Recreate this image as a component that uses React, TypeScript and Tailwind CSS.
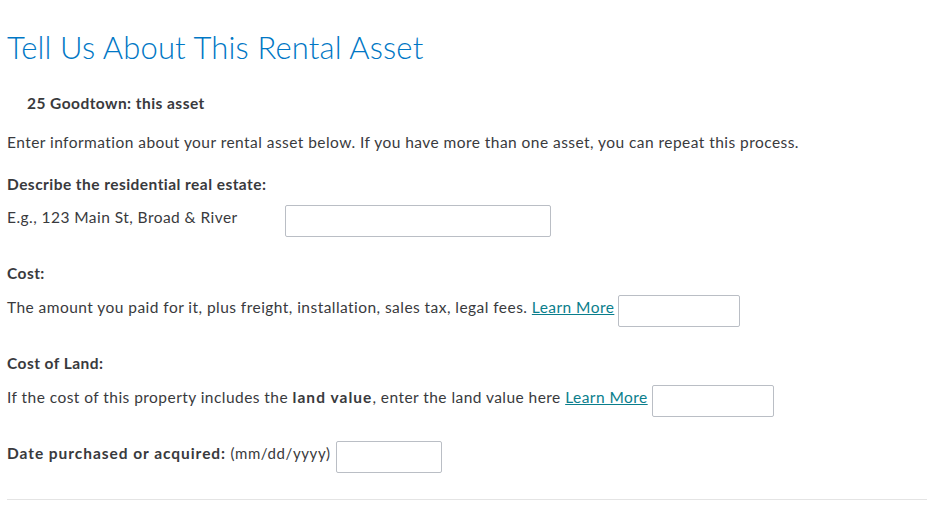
export default function App() {
  return (
    <div className="bg-white w-[942px] h-[517px] overflow-hidden px-[7px] text-[#393a3d] font-['Lato',sans-serif] text-[15.5px] leading-[20px] tracking-[0.45px]">
      <h1 className="pt-[28px] text-[31px] leading-[38px] font-light tracking-[0.15px] text-[#0077c5]">
        Tell Us About This Rental Asset
      </h1>
      <div className="mt-[27px] pl-[20px] font-bold">25 Goodtown: this asset</div>
      <p className="mt-[19px]">
        Enter information about your rental asset below. If you have more than one asset, you can repeat this process.
      </p>

      <div className="mt-[22px] font-bold">Describe the residential real estate:</div>
      <div className="mt-[11px] flex items-start">
        <span className="w-[278px] pt-[2px]">E.g., 123 Main St, Broad &amp; River</span>
        <input className="w-[266px] h-[32px] border border-[#babec5] rounded-[2px] outline-none" />
      </div>

      <div className="mt-[26px] font-bold">Cost:</div>
      <div className="mt-[12px] flex items-start">
        <span className="pt-[2px]">
          The amount you paid for it, plus freight, installation, sales tax, legal fees.{" "}
          <a href="#" className="text-[#0a7e8c] underline">Learn More</a>
        </span>
        <input className="ml-[4px] w-[122px] h-[32px] border border-[#babec5] rounded-[2px] outline-none" />
      </div>

      <div className="mt-[26px] font-bold">Cost of Land:</div>
      <div className="mt-[12px] flex items-start">
        <span className="pt-[2px]">
          If the cost of this property includes the <b className="tracking-[1.05px]">land value</b>, enter the land value here{" "}
          <a href="#" className="text-[#0a7e8c] underline">Learn More</a>
        </span>
        <input className="ml-[4px] w-[122px] h-[32px] border border-[#babec5] rounded-[2px] outline-none" />
      </div>

      <div className="mt-[24px] flex items-start">
        <span className="pt-[2px]">
          <b className="tracking-[0.95px]">Date purchased or acquired:</b>{" "}
          <span className="text-[15px] tracking-[0.6px]">(mm/dd/yyyy)</span>
        </span>
        <input className="ml-[5px] w-[106px] h-[32px] border border-[#babec5] rounded-[2px] outline-none" />
      </div>

      <hr className="mt-[26px] w-[920px] border-t border-[#e4e4e4]" />
    </div>
  );
}
